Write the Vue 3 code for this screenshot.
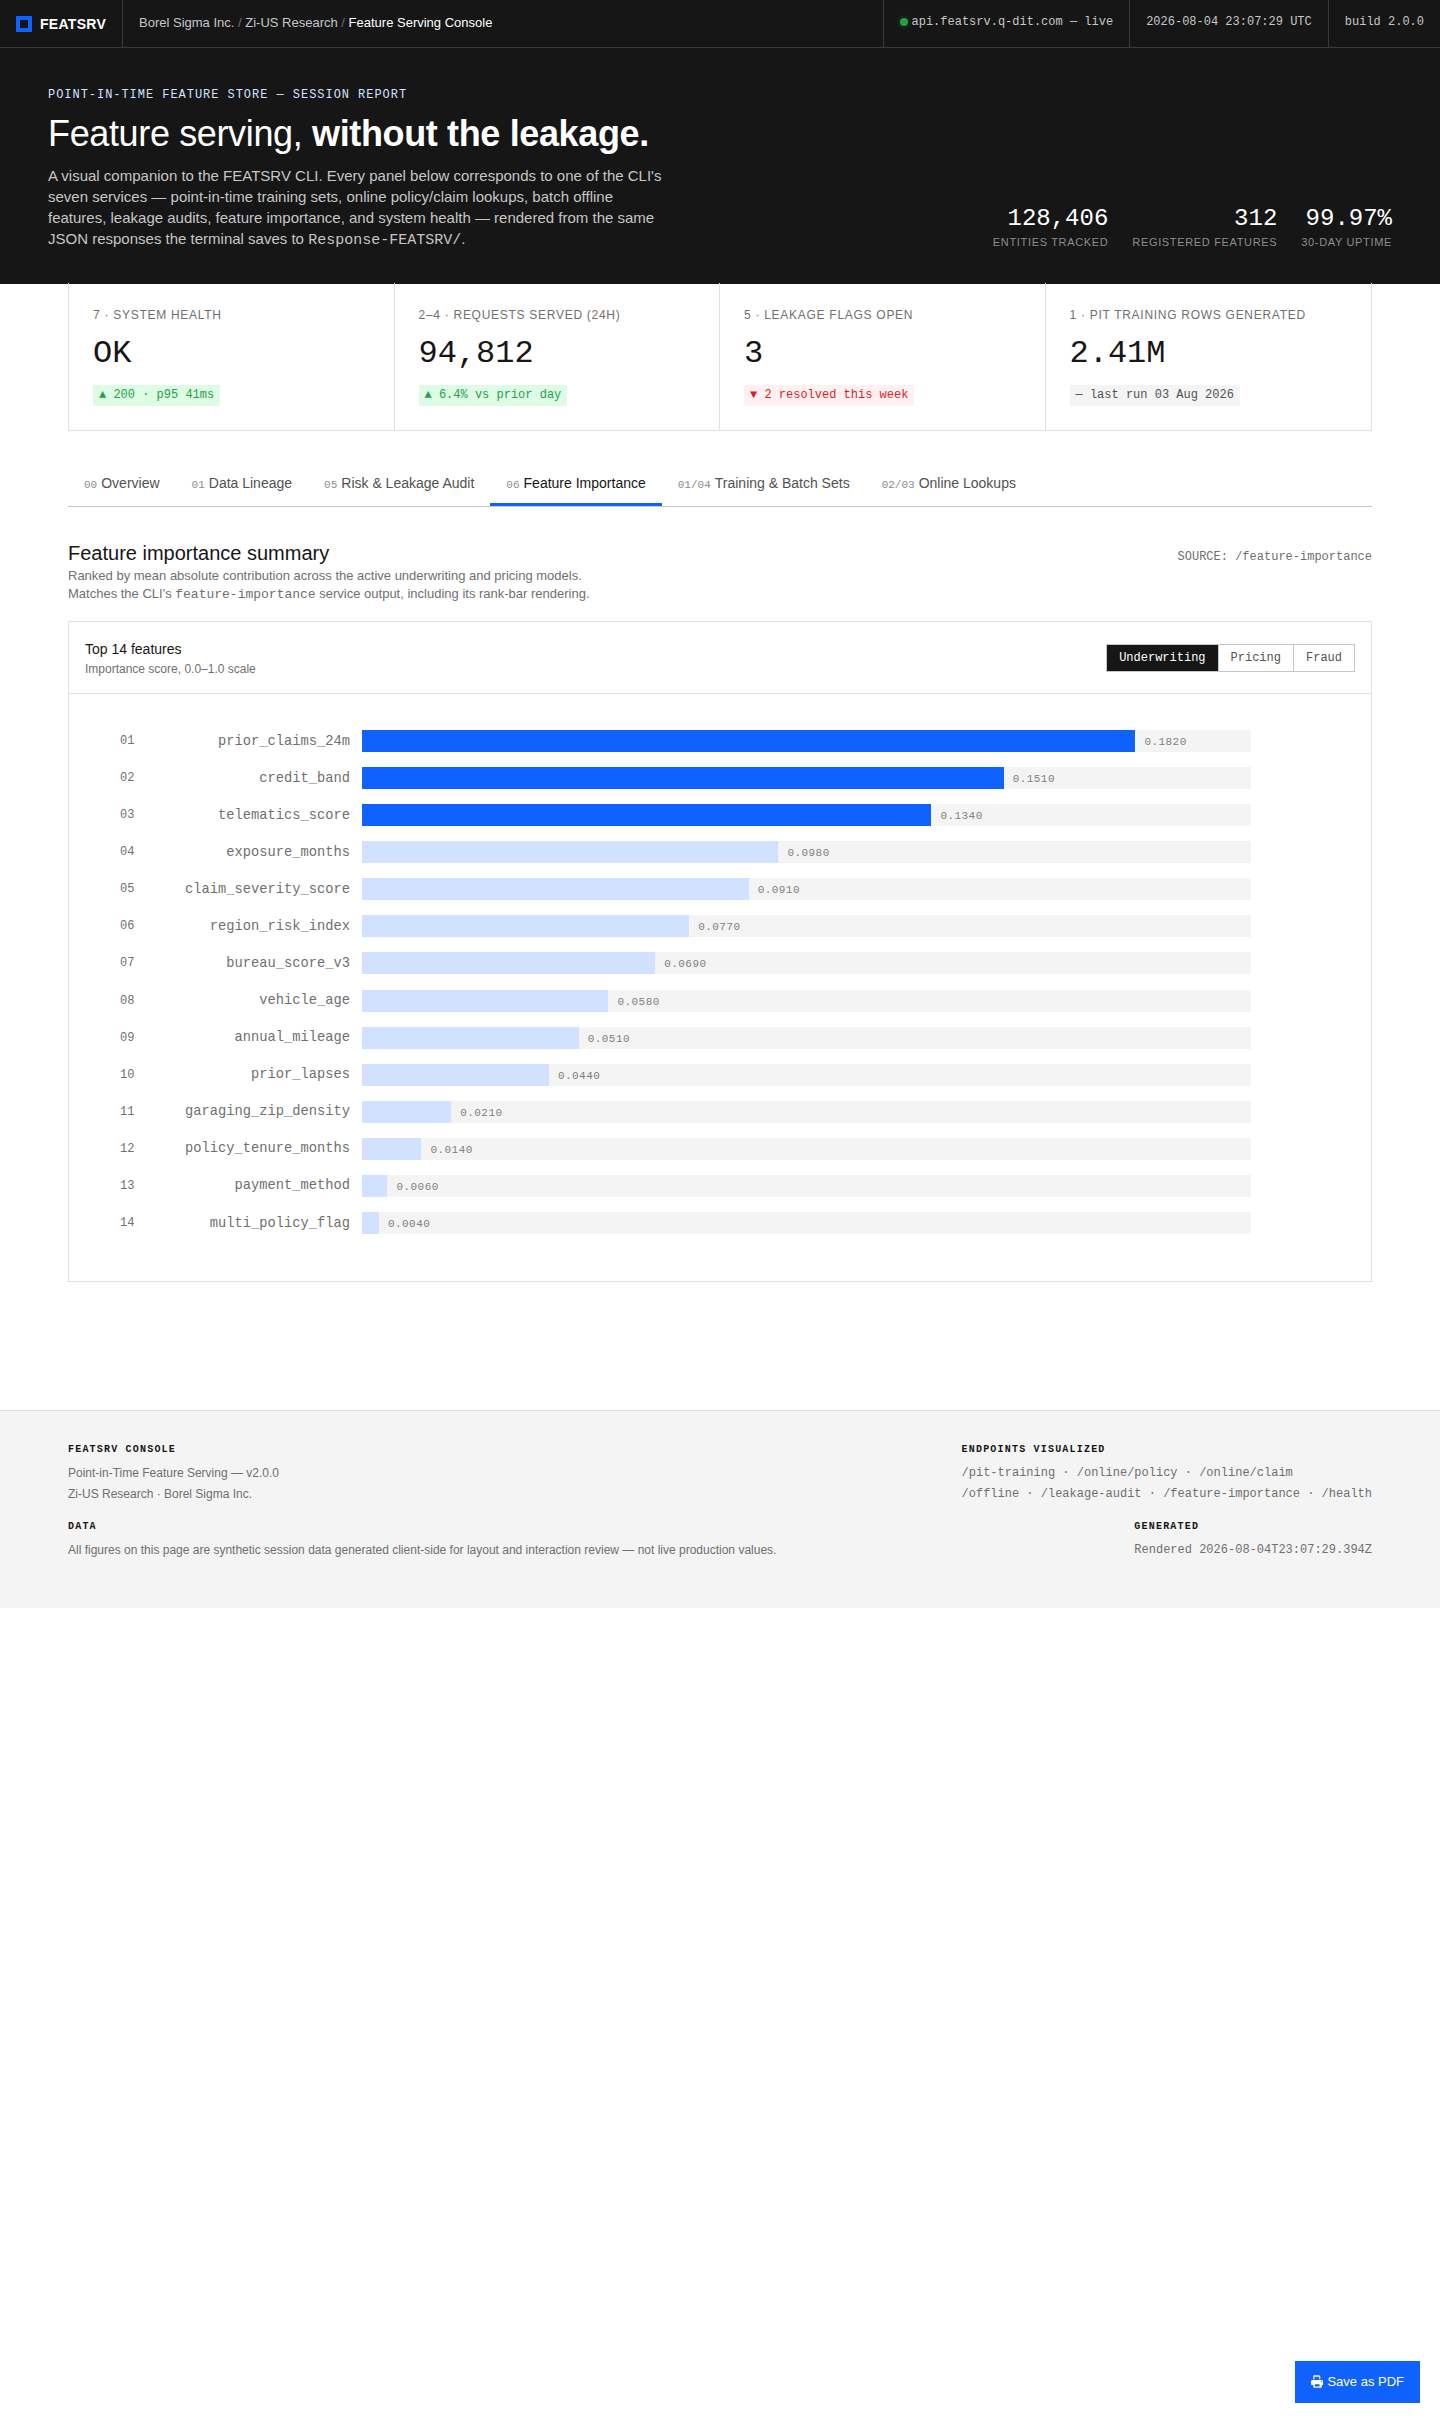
<script setup>
const kpis = [
  { label: '7 · System Health', value: 'OK', delta: '▲ 200 · p95 41ms', tone: 'up' },
  { label: '2–4 · Requests Served (24h)', value: '94,812', delta: '▲ 6.4% vs prior day', tone: 'up' },
  { label: '5 · Leakage Flags Open', value: '3', delta: '▼ 2 resolved this week', tone: 'down' },
  { label: '1 · PIT Training Rows Generated', value: '2.41M', delta: '— last run 03 Aug 2026', tone: 'flat' },
]

const tabs = [
  { idx: '00', name: 'Overview' },
  { idx: '01', name: 'Data Lineage' },
  { idx: '05', name: 'Risk & Leakage Audit' },
  { idx: '06', name: 'Feature Importance', active: true },
  { idx: '01/04', name: 'Training & Batch Sets' },
  { idx: '02/03', name: 'Online Lookups' },
]

const features = [
  ['prior_claims_24m', 0.182],
  ['credit_band', 0.151],
  ['telematics_score', 0.134],
  ['exposure_months', 0.098],
  ['claim_severity_score', 0.091],
  ['region_risk_index', 0.077],
  ['bureau_score_v3', 0.069],
  ['vehicle_age', 0.058],
  ['annual_mileage', 0.051],
  ['prior_lapses', 0.044],
  ['garaging_zip_density', 0.021],
  ['policy_tenure_months', 0.014],
  ['payment_method', 0.006],
  ['multi_policy_flag', 0.004],
]

function barWidth(v) {
  return (v / 0.182) * 87 + '%'
}
</script>

<template>
  <div class="page">
    <header class="topbar">
      <div class="brand"><span class="logo"></span>FEATSRV</div>
      <div class="crumbs">
        Borel Sigma Inc. <i>/</i> Zi-US Research <i>/</i> <b>Feature Serving Console</b>
      </div>
      <div class="meta"><span class="dot"></span>api.featsrv.q-dit.com — live</div>
      <div class="meta">2026-08-04 23:07:29 UTC</div>
      <div class="meta">build 2.0.0</div>
    </header>

    <section class="hero">
      <div class="hero-text">
        <div class="eyebrow">POINT-IN-TIME FEATURE STORE — SESSION REPORT</div>
        <h1>Feature serving, <strong>without the leakage.</strong></h1>
        <p>
          A visual companion to the FEATSRV CLI. Every panel below corresponds to one of the CLI's
          seven services — point-in-time training sets, online policy/claim lookups, batch offline
          features, leakage audits, feature importance, and system health — rendered from the same
          JSON responses the terminal saves to <code>Response-FEATSRV/</code>.
        </p>
      </div>
      <div class="hero-stats">
        <div class="stat"><div class="stat-num">128,406</div><div class="stat-label">Entities tracked</div></div>
        <div class="stat"><div class="stat-num">312</div><div class="stat-label">Registered features</div></div>
        <div class="stat"><div class="stat-num">99.97%</div><div class="stat-label">30-day uptime</div></div>
      </div>
    </section>

    <main class="content">
      <div class="kpis">
        <div v-for="k in kpis" :key="k.label" class="kpi">
          <div class="kpi-label">{{ k.label }}</div>
          <div class="kpi-value">{{ k.value }}</div>
          <span class="kpi-delta" :class="k.tone">{{ k.delta }}</span>
        </div>
      </div>

      <nav class="tabs">
        <a v-for="t in tabs" :key="t.name" class="tab" :class="{ active: t.active }">
          <span class="tab-idx">{{ t.idx }}</span>{{ t.name }}
        </a>
      </nav>

      <div class="section-head">
        <div>
          <h2>Feature importance summary</h2>
          <p>
            Ranked by mean absolute contribution across the active underwriting and pricing models.<br />
            Matches the CLI's <code>feature-importance</code> service output, including its rank-bar rendering.
          </p>
        </div>
        <div class="source">SOURCE: /feature-importance</div>
      </div>

      <div class="card">
        <div class="card-head">
          <div>
            <div class="card-title">Top 14 features</div>
            <div class="card-sub">Importance score, 0.0–1.0 scale</div>
          </div>
          <div class="seg">
            <button class="on">Underwriting</button>
            <button>Pricing</button>
            <button>Fraud</button>
          </div>
        </div>
        <div class="chart">
          <div v-for="(f, i) in features" :key="f[0]" class="row">
            <span class="rank">{{ String(i + 1).padStart(2, '0') }}</span>
            <span class="name">{{ f[0] }}</span>
            <div class="track">
              <div class="fill" :class="{ top: i < 3 }" :style="{ width: barWidth(f[1]) }"></div>
              <span class="val">{{ f[1].toFixed(4) }}</span>
            </div>
          </div>
        </div>
      </div>
    </main>

    <footer class="footer">
      <div class="foot-row">
        <div>
          <h4>FEATSRV CONSOLE</h4>
          <p>Point-in-Time Feature Serving — v2.0.0<br />Zi-US Research · Borel Sigma Inc.</p>
        </div>
        <div>
          <h4>ENDPOINTS VISUALIZED</h4>
          <p class="mono">/pit-training · /online/policy · /online/claim<br />/offline · /leakage-audit · /feature-importance · /health</p>
        </div>
      </div>
      <div class="foot-row second">
        <div>
          <h4>DATA</h4>
          <p>All figures on this page are synthetic session data generated client-side for layout and interaction review — not live production values.</p>
        </div>
        <div>
          <h4>GENERATED</h4>
          <p class="mono">Rendered 2026-08-04T23:07:29.394Z</p>
        </div>
      </div>
    </footer>

    <button class="save">
      <svg width="13" height="13" viewBox="0 0 512 512" fill="#fff">
        <path d="M128 0h210l46 46v114h-48V64H144v96H96V32c0-18 14-32 32-32zM64 192h384c35 0 64 29 64 64v112c0 18-14 32-32 32h-32v80c0 18-14 32-32 32H128c-18 0-32-14-32-32v-80H32c-18 0-32-14-32-32V256c0-35 29-64 64-64zm96 176v96h192v-96H160zm272-88a24 24 0 1 0 0-48 24 24 0 0 0 0 48z" />
      </svg>
      Save as PDF
    </button>
  </div>
</template>

<style>
html, body {
  margin: 0;
  background: #fff;
}
</style>

<style scoped>
.page {
  font-family: "Liberation Sans", Arial, sans-serif;
  color: #161616;
}

code {
  font-family: "Liberation Mono", monospace;
}

.topbar {
  display: flex;
  align-items: stretch;
  height: 47px;
  background: #161616;
  border-bottom: 1px solid #393939;
}

.brand {
  display: flex;
  align-items: center;
  gap: 8px;
  width: 123px;
  padding-left: 16px;
  box-sizing: border-box;
  border-right: 1px solid #393939;
  color: #fff;
  font-size: 14px;
  font-weight: 700;
  letter-spacing: 0.02em;
}

.logo {
  width: 16px;
  height: 16px;
  box-sizing: border-box;
  border: 4px solid #0f62fe;
}

.crumbs {
  flex: 1;
  padding-left: 16px;
  font-size: 13px;
  line-height: 46px;
  color: #c6c6c6;
}

.crumbs i {
  font-style: normal;
  color: #6f6f6f;
}

.crumbs b {
  font-weight: 400;
  color: #fff;
}

.meta {
  padding: 0 16px;
  border-left: 1px solid #393939;
  font-family: "Liberation Mono", monospace;
  font-size: 12px;
  line-height: 44px;
  color: #c6c6c6;
}

.dot {
  display: inline-block;
  width: 8px;
  height: 8px;
  margin-right: 4px;
  border-radius: 50%;
  background: #24a148;
  box-shadow: 0 0 0 3px rgba(36, 161, 72, 0.1);
  vertical-align: -1px;
}

.hero {
  display: flex;
  justify-content: space-between;
  align-items: flex-end;
  height: 236px;
  box-sizing: border-box;
  padding: 40px 48px 33px;
  background: #161616;
}

.hero-text {
  width: 620px;
}

.eyebrow {
  font-family: "Liberation Mono", monospace;
  font-size: 12px;
  line-height: 14px;
  letter-spacing: 0.08em;
  color: #d0e2ff;
}

.hero h1 {
  margin: 10px 0;
  font-size: 36px;
  line-height: 43px;
  font-weight: 400;
  letter-spacing: -0.01em;
  color: #fff;
}

.hero h1 strong {
  font-weight: 700;
}

.hero p {
  margin: 0;
  font-size: 15px;
  line-height: 21px;
  color: #c6c6c6;
}

.hero-stats {
  display: flex;
  gap: 24px;
  margin-bottom: 1px;
  text-align: right;
}

.stat-num {
  font-family: "Liberation Mono", monospace;
  font-size: 24px;
  line-height: 30px;
  color: #fff;
}

.stat-label {
  margin-top: 1px;
  font-size: 11px;
  line-height: 15px;
  letter-spacing: 0.06em;
  text-transform: uppercase;
  color: #8d8d8d;
}

.content {
  padding: 0 68px;
}

.kpis {
  position: relative;
  display: grid;
  grid-template-columns: repeat(4, 1fr);
  margin-top: -1px;
  border: 1px solid #e0e0e0;
  border-top: none;
}

.kpi {
  height: 147px;
  box-sizing: border-box;
  padding: 25px 24px 0;
  border-right: 1px solid #e0e0e0;
}

.kpi:last-child {
  border-right: none;
}

.kpi-label {
  font-size: 12px;
  line-height: 15px;
  letter-spacing: 0.06em;
  text-transform: uppercase;
  color: #6f6f6f;
}

.kpi-value {
  margin-top: 11px;
  font-family: "Liberation Mono", monospace;
  font-size: 32px;
  line-height: 40px;
}

.kpi-delta {
  display: inline-block;
  margin-top: 11px;
  padding: 2px 6px;
  font-family: "Liberation Mono", monospace;
  font-size: 12px;
  line-height: 17px;
}

.kpi-delta.up {
  background: #defbe6;
  color: #24a148;
}

.kpi-delta.down {
  background: #fff1f1;
  color: #da1e28;
}

.kpi-delta.flat {
  background: #f4f4f4;
  color: #525252;
}

.tabs {
  display: flex;
  height: 47px;
  margin-top: 28px;
  border-bottom: 1px solid #c6c6c6;
}

.tab {
  display: block;
  height: 47px;
  padding: 0 16px;
  box-sizing: border-box;
  font-size: 14px;
  line-height: 48px;
  color: #525252;
}

.tab.active {
  color: #161616;
  border-bottom: 3px solid #0f62fe;
}

.tab-idx {
  margin-right: 4px;
  font-family: "Liberation Mono", monospace;
  font-size: 11px;
  color: #8d8d8d;
}

.section-head {
  display: flex;
  justify-content: space-between;
  align-items: flex-start;
  margin-top: 32px;
}

h2 {
  margin: 0;
  font-size: 20px;
  font-weight: 400;
  line-height: 28px;
}

.section-head p {
  margin: 0;
  font-size: 13px;
  line-height: 18px;
  color: #6f6f6f;
}

.section-head code {
  color: #6f6f6f;
}

.source {
  margin-top: 10px;
  font-family: "Liberation Mono", monospace;
  font-size: 12px;
  line-height: 16px;
  color: #6f6f6f;
}

.card {
  margin-top: 17px;
  border: 1px solid #e0e0e0;
}

.card-head {
  display: flex;
  justify-content: space-between;
  align-items: center;
  height: 72px;
  box-sizing: border-box;
  padding: 0 16px;
  border-bottom: 1px solid #e0e0e0;
}

.card-title {
  font-size: 14px;
  line-height: 20px;
}

.card-sub {
  margin-top: 2px;
  font-size: 12px;
  line-height: 16px;
  color: #6f6f6f;
}

.seg {
  display: flex;
  border: 1px solid #c6c6c6;
}

.seg button {
  height: 26px;
  padding: 0 12px;
  border: none;
  border-left: 1px solid #c6c6c6;
  background: #fff;
  font-family: "Liberation Mono", monospace;
  font-size: 12px;
  color: #525252;
}

.seg button:first-child {
  border-left: none;
}

.seg button.on {
  background: #161616;
  color: #fff;
}

.chart {
  display: flex;
  flex-direction: column;
  gap: 15.08px;
  padding: 36px 120px 47px 51px;
}

.row {
  display: grid;
  grid-template-columns: 40px 202px 1fr;
  align-items: center;
  height: 22px;
  font-family: "Liberation Mono", monospace;
}

.rank {
  font-size: 12px;
  color: #6f6f6f;
}

.name {
  padding-right: 12px;
  font-size: 13.76px;
  text-align: right;
  color: #6f6f6f;
  white-space: nowrap;
}

.track {
  display: flex;
  align-items: center;
  height: 22px;
  background: #f4f4f4;
}

.fill {
  height: 100%;
  background: #d0e2ff;
}

.fill.top {
  background: #0f62fe;
}

.val {
  margin-left: 9px;
  padding-top: 2px;
  font-size: 11px;
  letter-spacing: 0.04em;
  color: #808080;
}

.footer {
  margin-top: 128px;
  height: 198px;
  box-sizing: border-box;
  padding: 32px 68px 0;
  background: #f4f4f4;
  border-top: 1px solid #e0e0e0;
}

.foot-row {
  display: flex;
  justify-content: space-between;
}

.foot-row.second {
  margin-top: 15px;
}

.footer h4 {
  margin: 0 0 6px;
  font-family: "Liberation Mono", monospace;
  font-size: 10px;
  line-height: 14px;
  font-weight: 700;
  letter-spacing: 0.12em;
  color: #161616;
}

.footer p {
  margin: 0;
  font-size: 12px;
  line-height: 21px;
  color: #6f6f6f;
}

.footer p.mono {
  font-family: "Liberation Mono", monospace;
}

.save {
  position: fixed;
  right: 20px;
  bottom: 20px;
  display: flex;
  align-items: center;
  gap: 4px;
  width: 125px;
  height: 42px;
  padding: 0 16px 2px;
  border: none;
  background: #0f62fe;
  color: #fff;
  font-family: "Liberation Sans", Arial, sans-serif;
  font-size: 13px;
  white-space: nowrap;
}
</style>
